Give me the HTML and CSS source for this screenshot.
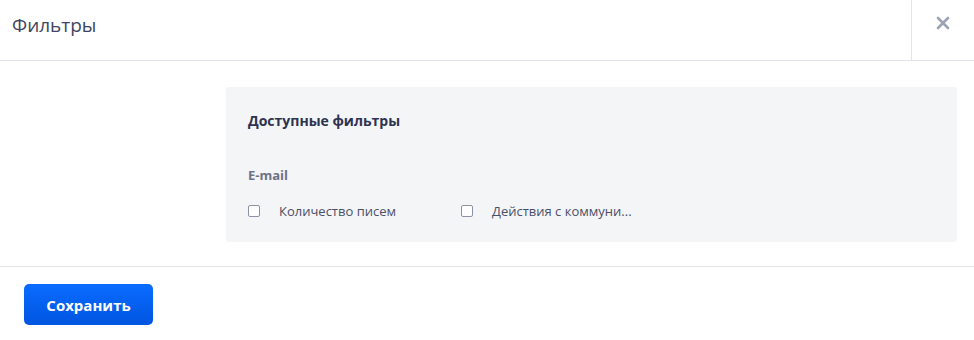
FILE: index.html
```html
<!DOCTYPE html>
<html lang="ru">
<head>
    <meta charset="UTF-8">
    <title>Фильтры</title>
    <link rel="stylesheet" href="styles.css">
</head>
<body>
    <div class="modal">
        <div class="modal-header">
            <div class="modal-title">Фильтры</div>
            <button class="close-btn" type="button" aria-label="Закрыть">
                <svg width="14" height="14" viewBox="0 0 14 14">
                    <path d="M2 2 L12 12 M12 2 L2 12" stroke="#9ba3b4" stroke-width="2.6" stroke-linecap="round"/>
                </svg>
            </button>
        </div>
        <div class="modal-body">
            <div class="filters">
                <div class="filters-title">Доступные фильтры</div>
                <div class="group-title">E-mail</div>
                <div class="options">
                    <label class="option">
                        <span class="checkbox"></span>
                        <span class="option-text">Количество писем</span>
                    </label>
                    <label class="option">
                        <span class="checkbox"></span>
                        <span class="option-text">Действия с коммуни...</span>
                    </label>
                </div>
            </div>
        </div>
        <div class="modal-footer">
            <button class="save-btn" type="button">Сохранить</button>
        </div>
    </div>
</body>
</html>
```

FILE: styles.css
```css
/* styles.css */

body {
    margin: 0;
    background-color: #fff;
    font-family: 'Open Sans', 'Noto Sans', sans-serif;
    color: #3b405c;
}

.modal {
    width: 974px;
    height: 340px;
    background-color: #fff;
}

.modal-header {
    display: flex;
    height: 60px;
    border-bottom: 1px solid #e1e4ea;
}

.modal-title {
    flex: 1;
    padding-left: 12px;
    font-size: 19px;
    line-height: 50px;
    color: #3f4563;
}

.close-btn {
    width: 63px;
    border: none;
    border-left: 1px solid #e1e4ea;
    background: none;
    padding: 0 0 14px 0;
    display: flex;
    align-items: center;
    justify-content: center;
    cursor: pointer;
}

.modal-body {
    padding: 26px 17px 24px 226px;
    border-bottom: 1px solid #e1e4ea;
}

.filters {
    background-color: #f4f5f7;
    border-radius: 3px;
    padding: 24px 22px 17px 22px;
    height: 114px;
}

.filters-title {
    font-size: 14px;
    font-weight: 700;
    color: #2e3350;
    line-height: 20px;
}

.group-title {
    margin-top: 35px;
    font-size: 13px;
    font-weight: 700;
    color: #6c7287;
    line-height: 18px;
}

.options {
    display: flex;
    margin-top: 19px;
}

.option {
    display: flex;
    align-items: center;
    width: 213px;
    font-size: 13px;
    color: #4b5068;
    line-height: 16px;
}

.checkbox {
    width: 10px;
    height: 10px;
    border: 1px solid #8c92a3;
    border-radius: 2px;
    background-color: #fff;
    margin-right: 19px;
}

.modal-footer {
    padding: 17px 24px;
}

.save-btn {
    width: 129px;
    height: 41px;
    border: none;
    border-radius: 5px;
    background: linear-gradient(#0a6cff, #0055e0);
    color: #fff;
    font-family: 'Open Sans', 'Noto Sans', sans-serif;
    font-size: 15px;
    font-weight: 700;
    cursor: pointer;
}
```
